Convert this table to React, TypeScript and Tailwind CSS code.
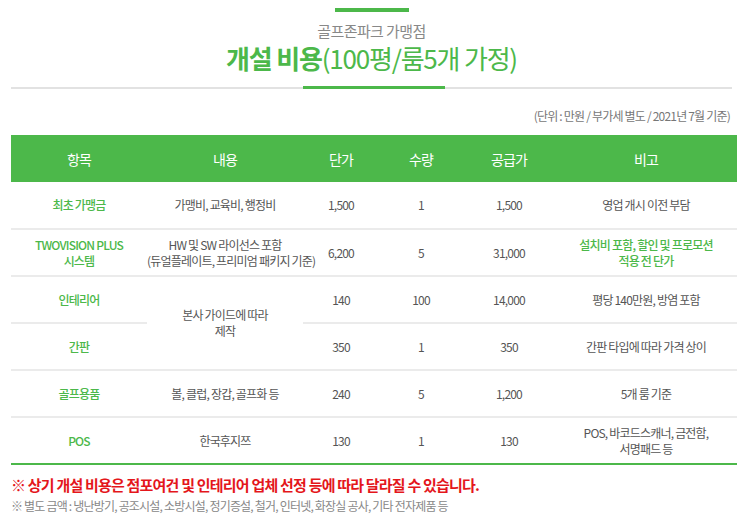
import React from "react";

const font = { fontFamily: '"Noto Sans CJK KR", "Noto Sans", sans-serif' };

type Row = {
  item: React.ReactNode;
  desc?: React.ReactNode;
  descSpan?: number;
  price: string;
  qty: string;
  total: string;
  note: React.ReactNode;
  noteGreen?: boolean;
};

const rows: Row[] = [
  { item: "최초 가맹금", desc: "가맹비, 교육비, 행정비", price: "1,500", qty: "1", total: "1,500", note: "영업 개시 이전 부담" },
  {
    item: (
      <>
        TWOVISION PLUS
        <br />
        시스템
      </>
    ),
    desc: (
      <>
        HW 및 SW 라이선스 포함
        <br />
        (듀얼플레이트, 프리미엄 패키지 기준)
      </>
    ),
    price: "6,200",
    qty: "5",
    total: "31,000",
    note: (
      <>
        설치비 포함, 할인 및 프로모션
        <br />
        적용 전 단가
      </>
    ),
    noteGreen: true,
  },
  {
    item: "인테리어",
    desc: (
      <>
        본사 가이드에 따라
        <br />
        제작
      </>
    ),
    descSpan: 2,
    price: "140",
    qty: "100",
    total: "14,000",
    note: "평당 140만원, 방염 포함",
  },
  { item: "간판", price: "350", qty: "1", total: "350", note: "간판 타입에 따라 가격 상이" },
  { item: "골프용품", desc: "볼, 클럽, 장갑, 골프화 등", price: "240", qty: "5", total: "1,200", note: "5개 룸 기준" },
  {
    item: "POS",
    desc: "한국후지쯔",
    price: "130",
    qty: "1",
    total: "130",
    note: (
      <>
        POS, 바코드스캐너, 금전함,
        <br />
        서명패드 등
      </>
    ),
  },
];

export default function App() {
  return (
    <div className="w-[743px] h-[524px] bg-white px-[11px] pt-[8px] text-[#555]" style={font}>
      <div className="flex flex-col items-center">
        <div className="w-[74px] h-[4px] bg-[#4cb84a]" />
        <p className="mt-[9px] text-[15px] leading-[20px] text-[#888] tracking-[-0.6px]">골프존파크 가맹점</p>
        <h1 className="mt-[3px] text-[26px] leading-[28px] text-[#4cb84a] tracking-[-1.2px]">
          <span className="font-bold">개설 비용</span>(100평/룸5개 가정)
        </h1>
      </div>
      <div className="relative mt-[15px] h-[2px] bg-[#e2e2e2]">
        <div className="absolute left-[292px] top-[-1px] w-[142px] h-[3px] bg-[#4cb84a]" />
      </div>
      <p className="mt-[19px] pr-[2px] text-right text-[12px] leading-[16px] text-[#777] tracking-[-0.8px]">
        (단위 : 만원 / 부가세 별도 / 2021년 7월 기준)
      </p>
      <table className="mt-[11px] w-[726px] table-fixed border-collapse text-center text-[12px] leading-[16px] tracking-[-0.8px]">
        <colgroup>
          <col className="w-[136px]" />
          <col className="w-[156px]" />
          <col className="w-[76px]" />
          <col className="w-[84px]" />
          <col className="w-[92px]" />
          <col className="w-[182px]" />
        </colgroup>
        <thead>
          <tr className="h-[47px] bg-[#4cb84a] text-white text-[14px]">
            <th className="font-normal">항목</th>
            <th className="font-normal">내용</th>
            <th className="font-normal">단가</th>
            <th className="font-normal">수량</th>
            <th className="font-normal">공급가</th>
            <th className="font-normal">비고</th>
          </tr>
        </thead>
        <tbody>
          {rows.map((r, i) => (
            <tr
              key={i}
              className={
                "h-[47px] " +
                (i === rows.length - 1 ? "border-b-2 border-[#4cb84a]" : "border-b-2 border-[#ebebeb]")
              }
            >
              <td className="p-0 whitespace-nowrap text-[#4cb84a] font-medium">{r.item}</td>
              {r.desc !== undefined && (
                <td rowSpan={r.descSpan} className="p-0 whitespace-nowrap bg-white">
                  {r.desc}
                </td>
              )}
              <td className="p-0">{r.price}</td>
              <td className="p-0">{r.qty}</td>
              <td className="p-0">{r.total}</td>
              <td className={"p-0 whitespace-nowrap " + (r.noteGreen ? "text-[#4cb84a] font-medium" : "")}>
                {r.note}
              </td>
            </tr>
          ))}
        </tbody>
      </table>
      <p className="mt-[10px] text-[15px] leading-[20px] font-bold text-[#e4161b] tracking-[-0.8px]">
        ※ 상기 개설 비용은 점포여건 및 인테리어 업체 선정 등에 따라 달라질 수 있습니다.
      </p>
      <p className="mt-[3px] text-[12px] leading-[16px] text-[#888] tracking-[-0.8px]">
        ※ 별도 금액 : 냉난방기, 공조시설, 소방시설, 정기증설, 철거, 인터넷, 화장실 공사, 기타 전자제품 등
      </p>
    </div>
  );
}
